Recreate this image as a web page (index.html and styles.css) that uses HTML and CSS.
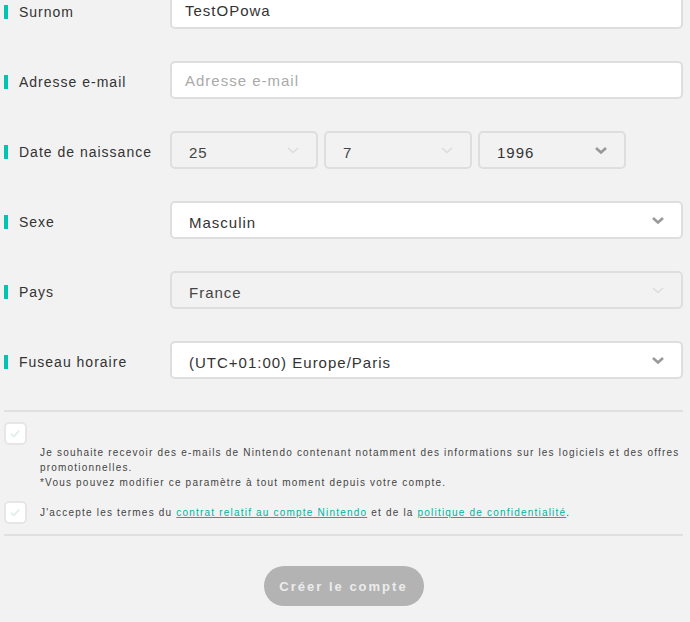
FILE: index.html
```html
<!DOCTYPE html>
<html lang="fr">
<head>
    <meta charset="UTF-8">
    <meta name="viewport" content="width=device-width, initial-scale=1.0">
    <title>Créer un compte Nintendo</title>
    <link rel="stylesheet" href="styles.css">
</head>
<body>
    <form class="form">
        <div class="rows">
            <div class="row">
                <label class="label">Surnom</label>
                <div class="field">TestOPowa</div>
            </div>
            <div class="row">
                <label class="label">Adresse e-mail</label>
                <div class="field placeholder">Adresse e-mail</div>
            </div>
            <div class="row">
                <label class="label">Date de naissance</label>
                <div class="date">
                    <div class="select disabled"><span>25</span>
                        <svg class="chevron" viewBox="0 0 12 7"><polyline points="1,1 6,5.5 11,1"/></svg>
                    </div>
                    <div class="select disabled"><span>7</span>
                        <svg class="chevron" viewBox="0 0 12 7"><polyline points="1,1 6,5.5 11,1"/></svg>
                    </div>
                    <div class="select gray"><span>1996</span>
                        <svg class="chevron" viewBox="0 0 12 7"><polyline points="1,1 6,5.5 11,1"/></svg>
                    </div>
                </div>
            </div>
            <div class="row">
                <label class="label">Sexe</label>
                <div class="select"><span>Masculin</span>
                    <svg class="chevron" viewBox="0 0 12 7"><polyline points="1,1 6,5.5 11,1"/></svg>
                </div>
            </div>
            <div class="row">
                <label class="label">Pays</label>
                <div class="select disabled"><span>France</span>
                    <svg class="chevron" viewBox="0 0 12 7"><polyline points="1,1 6,5.5 11,1"/></svg>
                </div>
            </div>
            <div class="row">
                <label class="label">Fuseau horaire</label>
                <div class="select"><span>(UTC+01:00) Europe/Paris</span>
                    <svg class="chevron" viewBox="0 0 12 7"><polyline points="1,1 6,5.5 11,1"/></svg>
                </div>
            </div>
        </div>

        <hr class="divider">

        <div class="checks">
            <span class="checkbox">
                <svg viewBox="0 0 23 23"><polyline points="6,12 9.5,15 16,8"/></svg>
            </span>
            <p class="note">Je souhaite recevoir des e-mails de Nintendo contenant notamment des informations sur les logiciels et des offres promotionnelles.<br>*Vous pouvez modifier ce paramètre à tout moment depuis votre compte.</p>

            <div class="check-row">
                <span class="checkbox">
                    <svg viewBox="0 0 23 23"><polyline points="6,12 9.5,15 16,8"/></svg>
                </span>
                <p class="terms">J'accepte les termes du <a href="#">contrat relatif au compte Nintendo</a> et de la <a href="#">politique de confidentialité</a>.</p>
            </div>
        </div>

        <hr class="divider">

        <div class="actions">
            <button type="button" class="btn" disabled>Créer le compte</button>
        </div>
    </form>
</body>
</html>
```

FILE: styles.css
```css
body {
    margin: 0;
    background-color: #f2f2f2;
    font-family: "Liberation Sans", Arial, sans-serif;
    color: #333;
}
.form {
    margin-top: -9px;
    padding: 0 7px 0 4px;
}
.rows {
    display: flex;
    flex-direction: column;
    gap: 32px;
}
.row {
    display: grid;
    grid-template-columns: 166px 1fr;
    align-items: center;
    height: 38px;
}
.label {
    display: flex;
    align-items: center;
    padding-top: 4px;
    font-size: 14px;
    letter-spacing: 1px;
    color: #333;
}
.label::before {
    content: "";
    width: 4px;
    height: 14px;
    margin-right: 11px;
    background-color: #00c3b3;
}
.field,
.select {
    box-sizing: border-box;
    height: 38px;
    display: flex;
    align-items: center;
    border: 2px solid #dedede;
    border-radius: 5px;
    background-color: #fff;
    font-size: 15px;
    letter-spacing: 1px;
}
.field {
    padding-left: 13px;
}
.placeholder {
    color: #aaa;
}
.select {
    justify-content: space-between;
    padding: 0 17px 0 17px;
}
.select span {
    padding-top: 4px;
}
.chevron {
    width: 12px;
    height: 7px;
    fill: none;
    stroke: #999;
    stroke-width: 2.6;
}
.select.gray {
    background-color: #f2f2f2;
}
.select.disabled {
    background-color: #f2f2f2;
    color: #444;
}
.select.disabled .chevron {
    stroke: #dcdcdc;
    stroke-width: 1.6;
}
.date {
    display: grid;
    grid-template-columns: repeat(3, 148px);
    gap: 6px;
}
.divider {
    margin: 31px 0 0 0;
    border: none;
    height: 2px;
    background-color: #e0e0e0;
}
.checks {
    padding: 10px 0;
}
.checkbox {
    box-sizing: border-box;
    display: block;
    flex: none;
    width: 23px;
    height: 23px;
    border: 2px solid #e6e6e6;
    border-radius: 5px;
    background-color: #fff;
}
.checkbox svg {
    display: block;
    width: 19px;
    height: 19px;
    fill: none;
    stroke: #e2eeee;
    stroke-width: 2.2;
}
.note,
.terms {
    font-size: 10px;
    letter-spacing: 1.2px;
    line-height: 15px;
    color: #444;
}
.note {
    margin: 0 0 11px 36px;
}
.check-row {
    display: flex;
    align-items: center;
    gap: 13px;
}
.terms {
    margin: 0;
}
.terms a {
    color: #00b3a4;
}
.checks + .divider {
    margin-top: 0;
}
.actions {
    display: flex;
    justify-content: center;
    padding-top: 30px;
}
.btn {
    width: 160px;
    height: 40px;
    border: none;
    border-radius: 20px;
    background-color: #b3b3b3;
    color: #ececec;
    font-family: "Liberation Sans", Arial, sans-serif;
    font-weight: bold;
    font-size: 13px;
    letter-spacing: 2px;
}
```
